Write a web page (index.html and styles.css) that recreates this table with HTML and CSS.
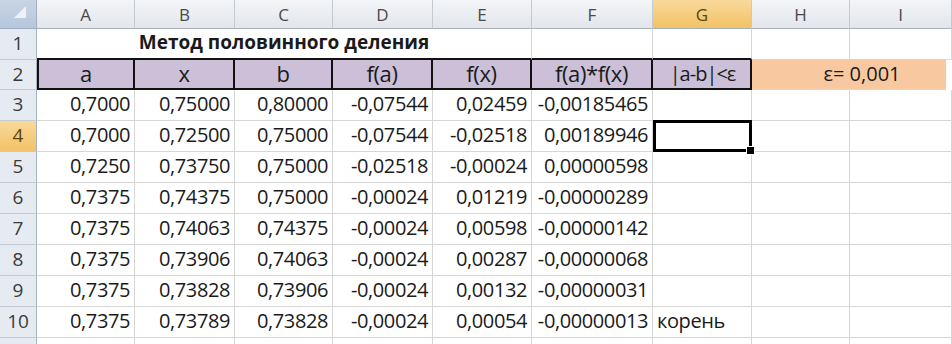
FILE: index.html
```html
<!DOCTYPE html>
<html lang="ru">
<head>
<meta charset="utf-8">
<title>Метод половинного деления</title>
<link rel="stylesheet" href="styles.css">
</head>
<body>
<div class="sheet">
  <div class="corner"><span class="tri"></span></div>
  <div class="ch">A</div><div class="ch">B</div><div class="ch">C</div><div class="ch">D</div><div class="ch">E</div><div class="ch">F</div><div class="ch sel">G</div><div class="ch">H</div><div class="ch">I</div>

  <div class="rh">1</div>
  <div class="c title">Метод половинного деления</div><div class="c r1"></div><div class="c r1"></div><div class="c"></div><div class="c"></div>

  <div class="rh">2</div>
  <div class="c hd first">a</div><div class="c hd">x</div><div class="c hd">b</div><div class="c hd">f(a)</div><div class="c hd">f(x)</div><div class="c hd">f(a)*f(x)</div><div class="c hd cond">|a-b|&lt;ε</div><div class="c eps">ε= 0,001</div>

  <div class="rh">3</div>
  <div class="c n">0,7000</div><div class="c n">0,75000</div><div class="c n">0,80000</div><div class="c n">-0,07544</div><div class="c n">0,02459</div><div class="c n">-0,00185465</div><div class="c"></div><div class="c"></div><div class="c"></div>

  <div class="rh sel">4</div>
  <div class="c n">0,7000</div><div class="c n">0,72500</div><div class="c n">0,75000</div><div class="c n">-0,07544</div><div class="c n">-0,02518</div><div class="c n">0,00189946</div><div class="c active"></div><div class="c"></div><div class="c"></div>

  <div class="rh">5</div>
  <div class="c n">0,7250</div><div class="c n">0,73750</div><div class="c n">0,75000</div><div class="c n">-0,02518</div><div class="c n">-0,00024</div><div class="c n">0,00000598</div><div class="c"></div><div class="c"></div><div class="c"></div>

  <div class="rh">6</div>
  <div class="c n">0,7375</div><div class="c n">0,74375</div><div class="c n">0,75000</div><div class="c n">-0,00024</div><div class="c n">0,01219</div><div class="c n">-0,00000289</div><div class="c"></div><div class="c"></div><div class="c"></div>

  <div class="rh">7</div>
  <div class="c n">0,7375</div><div class="c n">0,74063</div><div class="c n">0,74375</div><div class="c n">-0,00024</div><div class="c n">0,00598</div><div class="c n">-0,00000142</div><div class="c"></div><div class="c"></div><div class="c"></div>

  <div class="rh">8</div>
  <div class="c n">0,7375</div><div class="c n">0,73906</div><div class="c n">0,74063</div><div class="c n">-0,00024</div><div class="c n">0,00287</div><div class="c n">-0,00000068</div><div class="c"></div><div class="c"></div><div class="c"></div>

  <div class="rh">9</div>
  <div class="c n">0,7375</div><div class="c n">0,73828</div><div class="c n">0,73906</div><div class="c n">-0,00024</div><div class="c n">0,00132</div><div class="c n">-0,00000031</div><div class="c"></div><div class="c"></div><div class="c"></div>

  <div class="rh">10</div>
  <div class="c n">0,7375</div><div class="c n">0,73789</div><div class="c n">0,73828</div><div class="c n">-0,00024</div><div class="c n">0,00054</div><div class="c n">-0,00000013</div><div class="c txt">корень</div><div class="c"></div><div class="c"></div>

  <div class="rh"></div>
  <div class="c"></div><div class="c"></div><div class="c"></div><div class="c"></div><div class="c"></div><div class="c"></div><div class="c"></div><div class="c"></div><div class="c"></div>
</div>
</body>
</html>
```
FILE: styles.css
```css
* { box-sizing: border-box; }
html, body { margin: 0; padding: 0; background: #fff; }
body { width: 952px; height: 344px; overflow: hidden; }

.sheet {
  display: grid;
  grid-template-columns: 37px 98px 100px 98px 100px 99px 121px 99px 98px 102px;
  grid-template-rows: 29px 31px 30px repeat(8, 31px) 20px;
  font-family: "Open Sans", "Liberation Sans", sans-serif;
  font-size: 20px;
  color: #1a1a1a;
}

.corner {
  background: linear-gradient(#c8d5e4, #b6c7dc);
  border-right: 1px solid #9eb0c6;
  border-bottom: 1px solid #9eb0c6;
  position: relative;
}
.tri {
  position: absolute;
  right: 10px;
  bottom: 10px;
  width: 0; height: 0;
  border-left: 12px solid transparent;
  border-bottom: 12px solid #eef2f7;
}

.ch {
  background: linear-gradient(#f3f5f8, #e2e6eb);
  border-right: 1px solid #c4cad2;
  border-bottom: 1px solid #a9b3c0;
  display: flex; align-items: center; justify-content: center;
  color: #4a4a4a;
  font-size: 17px;
  padding-top: 1px;
}
.ch.sel, .rh.sel {
  background: linear-gradient(#f9d99b, #f2c265);
  color: #5a4415;
}

.rh {
  background: #e6ebf1;
  border-right: 1px solid #a9b3c0;
  border-bottom: 1px solid #c4cad2;
  display: flex; align-items: center; justify-content: center;
  color: #3a3a3a;
  font-size: 19px;
  padding-bottom: 2px;
}

.c {
  border-right: 1px solid #d6d6d6;
  border-bottom: 1px solid #d6d6d6;
  display: flex; align-items: center;
  padding: 0 4px 3px 4px;
  white-space: nowrap;
  letter-spacing: -0.4px;
}
.n { justify-content: flex-end; }
.txt { justify-content: flex-start; }

.title {
  grid-column: span 5;
  justify-content: center;
  font-weight: 700;
  font-size: 19px;
  letter-spacing: 0;
  border-bottom: 2px solid #111;
}
.r1 { border-bottom: 2px solid #111; }

.hd {
  background: #cbc0d7;
  justify-content: center;
  border-right: 2px solid #111;
  border-bottom: 2px solid #111;
  font-size: 22px;
  letter-spacing: -0.4px;
  padding-bottom: 2px;
}
.hd.first { border-left: 2px solid #111; }
.hd.cond { font-size: 20px; letter-spacing: -1px; padding-left: 6px; }

.eps {
  grid-column: span 2;
  background: #f8c9a1;
  justify-content: center;
  border-right: none;
  border-bottom: 1px solid #e8d4c4;
  margin-right: 6px;
  padding-left: 30px;
  letter-spacing: 0;
}

.active {
  position: relative;
  border: 3px solid #000;
  margin: -1px 0 0 0;
}
.active::after {
  content: "";
  position: absolute;
  right: -6px;
  bottom: -6px;
  width: 7px;
  height: 7px;
  background: #000;
  border: 1px solid #fff;
}
```
